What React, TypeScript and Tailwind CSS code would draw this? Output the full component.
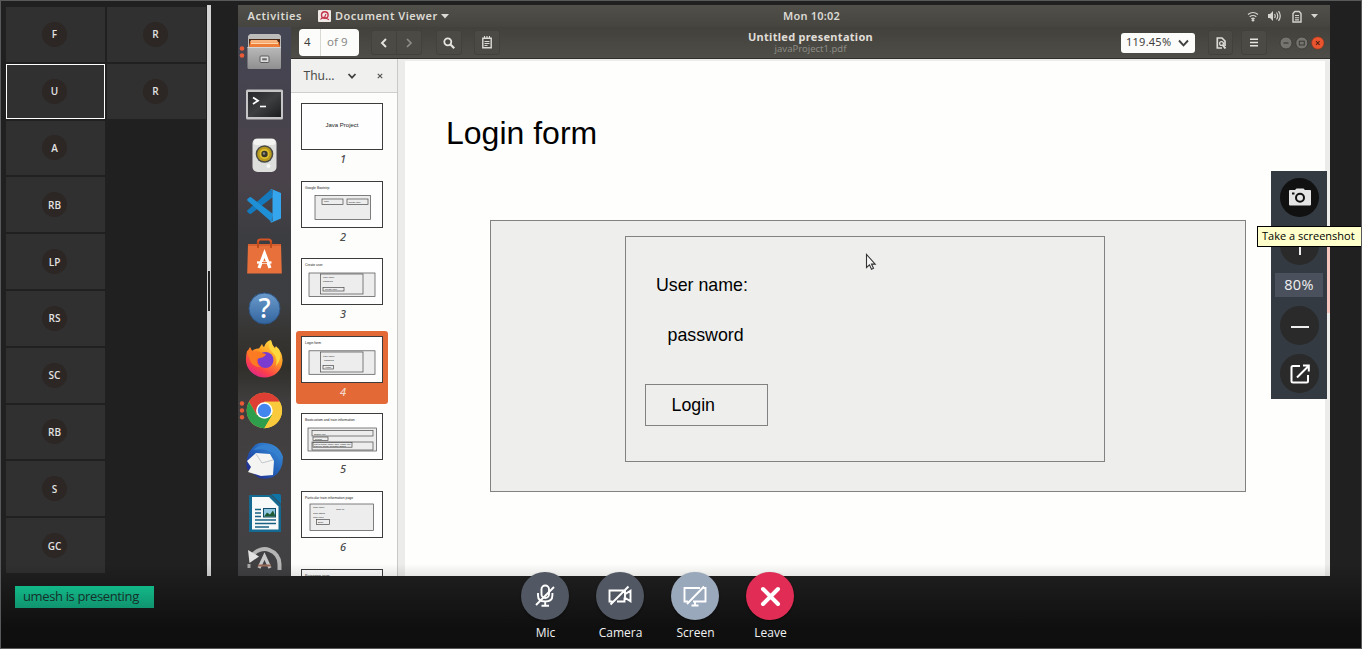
import React from 'react';

const UBUNTU = "font-['Noto_Sans','Open_Sans',sans-serif]";
const ARIAL = "font-['Liberation_Sans',Arial,sans-serif]";

function Tile({ label, active = false }: { label: string; active?: boolean }) {
  return (
    <div
      className={
        'flex items-center justify-center bg-[#303030] ' +
        (active ? 'border border-white' : 'px-px')
      }
    >
      <div className="mr-[2px] flex h-[25px] w-[25px] items-center justify-center rounded-full bg-[#2c2624] text-[10px] leading-none font-semibold text-[#e2e2e2]">
        {label}
      </div>
    </div>
  );
}

function Participants() {
  const left = ['F', 'U', 'A', 'RB', 'LP', 'RS', 'SC', 'RB', 'S', 'GC'];
  return (
    <div className="flex w-[201px] shrink-0 gap-[2px] pt-[2px]">
      <div className="grid w-[99px] auto-rows-[54.8px] content-start gap-[2px]">
        {left.map((l, i) => (
          <Tile key={i} label={l} active={i === 1} />
        ))}
      </div>
      <div className="grid w-[99px] auto-rows-[54.8px] content-start gap-[2px]">
        <Tile label="R" />
        <Tile label="R" />
      </div>
    </div>
  );
}

function Slot({ children }: { children: React.ReactNode }) {
  return (
    <svg viewBox="0 0 54 51.3" className="block h-[51.3px] w-[54px] shrink-0">
      {children}
    </svg>
  );
}

function Dock() {
  return (
    <div className="flex w-[53px] shrink-0 flex-col overflow-hidden bg-[linear-gradient(180deg,#444654_0%,#45434e_12%,#4b434b_27%,#3c3d41_38%,#3d3e41_50%,#363533_56%,#302f2a_62%,#403d3e_68%,#444244_85%,#403f41_100%)]">
      <svg width="0" height="0" className="absolute">
        <defs>
          <linearGradient id="cab" x1="0" y1="0" x2="0" y2="1">
            <stop offset="0" stopColor="#b9b9b9" />
            <stop offset="1" stopColor="#8f8f8f" />
          </linearGradient>
          <linearGradient id="term" x1="0" y1="0" x2="1" y2="1">
            <stop offset="0" stopColor="#26282b" />
            <stop offset="0.5" stopColor="#3c3e40" />
            <stop offset="1" stopColor="#1c1d1f" />
          </linearGradient>
          <linearGradient id="help" x1="0" y1="0" x2="0" y2="1">
            <stop offset="0" stopColor="#6b9bcb" />
            <stop offset="1" stopColor="#33659f" />
          </linearGradient>
          <linearGradient id="fox" x1="0.8" y1="0" x2="0.2" y2="1">
            <stop offset="0" stopColor="#ffe14a" />
            <stop offset="0.4" stopColor="#ff9a22" />
            <stop offset="0.75" stopColor="#fb3f4b" />
            <stop offset="1" stopColor="#d8219a" />
          </linearGradient>
          <linearGradient id="bird" x1="0" y1="1" x2="1" y2="0">
            <stop offset="0" stopColor="#241a80" />
            <stop offset="0.5" stopColor="#2360b8" />
            <stop offset="1" stopColor="#3f97df" />
          </linearGradient>
        </defs>
      </svg>
      <Slot>
        <circle cx="4" cy="21.5" r="2.3" fill="#ea5a35" />
        <circle cx="4" cy="28.5" r="2.3" fill="#ea5a35" />
        <path d="M12 7h29l2 2v15H10V9z" fill="#bcbcba" />
        <path d="M11 12h31v9H11z" fill="#4a2818" />
        <path d="M13 13h26l1 2H12z" fill="#f6b27c" />
        <path d="M12 15h29l1 5H11z" fill="#ee7d38" />
        <path d="M13 15.500h27v1.500H13z" fill="#ffd6a8" />
        <path d="M9.500 20h33.500v20.500q0 1.500-1.500 1.500H11q-1.500 0-1.500-1.500z" fill="url(#cab)" />
        <path d="M9.500 20h33.500v1H9.500z" fill="#d6d6d6" />
        <rect x="22" y="29" width="9" height="6.500" rx="1" fill="#dcdcdc" stroke="#5a5a5a" />
        <rect x="24.200" y="31.300" width="4.600" height="2" fill="#666" />
      </Slot>
      <Slot>
        <rect x="8" y="11.500" width="37" height="30" rx="1.500" fill="#c6c6c6" />
        <rect x="10" y="14" width="33" height="25" fill="url(#term)" />
        <path d="M15 19.500l5 3.200-5 3.200" fill="none" stroke="#fff" strokeWidth="1.800" />
        <path d="M22 28.500h6" stroke="#fff" strokeWidth="1.600" />
      </Slot>
      <Slot>
        <rect x="14.500" y="8.500" width="24" height="33.500" rx="5" fill="#dededc" />
        <rect x="15.500" y="9" width="22" height="6" rx="3" fill="#f3f3f1" />
        <circle cx="26.500" cy="24" r="8.800" fill="#4a4a44" />
        <circle cx="26.500" cy="24" r="7.300" fill="#b99a1e" />
        <circle cx="26.500" cy="24" r="5" fill="#dfc02c" />
        <circle cx="26.500" cy="24" r="3.200" fill="#37352c" />
        <circle cx="26" cy="23.500" r="1.200" fill="#8c8a80" />
        <circle cx="30.500" cy="36" r="2" fill="#f6f6f4" />
      </Slot>
      <Slot>
        <path d="M33.500 8L9.500 29.300q-.8.900 0 1.800l2 1.700q.8.500 1.600 0L35 16z" fill="#1479bd" />
        <path d="M33.500 41L9.500 19.700q-.8-.9 0-1.800l2-1.700q.8-.5 1.600 0L35 33z" fill="#1f8fd6" />
        <path d="M33.500 8l9.500 4v25.500l-9.500 4q-1 0-1.500-.7l2.500-.8V8.800L32 8.500z" fill="#35a5ee" />
      </Slot>
      <Slot>
        <path d="M20 16V10q0-2.500 2.500-2.500h8Q33 7.500 33 10v6" fill="none" stroke="#d45425" strokeWidth="2.200" />
        <path d="M10 12h33l.8 29.500H9.200z" fill="#e8703a" />
        <path d="M10 12h33v2H10z" fill="#d86030" />
        <path d="M20 10v6M33 10v6" stroke="#b84618" strokeWidth="1.600" />
        <path d="M21 36l5.500-14.500L32 36" fill="none" stroke="#fff" strokeWidth="3.200" />
        <path d="M19 30.500h14.500" stroke="#fff" strokeWidth="2.300" />
        <path d="M24 30.500h5" stroke="#e8703a" strokeWidth="1" />
      </Slot>
      <Slot>
        <circle cx="26.500" cy="25.500" r="15.500" fill="url(#help)" stroke="#2d5688" />
        <text x="26.500" y="35" textAnchor="middle" fontSize="27" fontWeight="500" fill="#fff" className={UBUNTU}>
          ?
        </text>
      </Slot>
      <Slot>
        <path
          d="M9 16q1 0 3-4l2 4q4-3 7-2.500L24 9q1 3 2 3 2-6 7-7 1 5 4 8l1-2q7 7 6.500 15C44 36 36 42.500 26.500 42.500S8.500 35 8 26q-.3-5 1-10z"
          fill="url(#fox)"
        />
        <circle cx="27.500" cy="25" r="8" fill="#7a3bd0" />
        <path d="M9 17q2-1 3-4l3 4q5-2 9 1l4 1q-1 3-6 4-2 0-3 2-1 5 4 7-9 0-11-7z" fill="#fb7a22" />
        <path d="M31 9q0 6 4 9 5 5 3 13 7-8 3-17l-3-2-1 2q-3-2-4-8z" fill="#ffd83d" />
      </Slot>
      <Slot>
        <circle cx="4" cy="17.500" r="2.200" fill="#ea5a35" />
        <circle cx="4" cy="24.500" r="2.200" fill="#ea5a35" />
        <circle cx="4" cy="31.300" r="2.200" fill="#ea5a35" />
        <circle cx="26.400" cy="24.500" r="17.700" fill="#f6c93b" />
        <path d="M26.400 15.700h15.300A17.700 17.700 0 0 0 11 15.700l7.800 13.200z" fill="#dd3f34" />
        <path d="M11 15.700A17.700 17.700 0 0 0 26.400 42.200l7.700-13.300-15.300 0z" fill="#2f9e4c" />
        <path d="M26.400 42.200A17.700 17.700 0 0 0 41.700 15.700H26.400l7.700 13.200z" fill="#f9cb3c" />
        <circle cx="26.400" cy="24.500" r="8.300" fill="#fff" />
        <circle cx="26.400" cy="24.500" r="6.700" fill="#4286ee" />
      </Slot>
      <Slot>
        <path d="M17 8q4-3 10-2 14 1 18 14 0 14-10 20-6 3-14 1L9 32Q6 18 17 8z" fill="url(#bird)" />
        <path d="M15 13q9-8 19-4 8 4 8 14-4-8-11-9-6-3-16-1z" fill="#3580cf" />
        <path d="M9 24l9-8 14 1 4 7-1 14-12 1-13-4 3-5z" fill="#f4f4f2" />
        <path d="M18 17l6 9 11-3" fill="none" stroke="#c3c6cc" strokeWidth="1" />
      </Slot>
      <Slot>
        <path d="M11 6h22l10 10v27H11z" fill="#156a92" />
        <path d="M33 5l10 10V7q0-2-2-2z" fill="#0e74a8" />
        <path d="M14 8h17l9.500 9.500V40.500H14z" fill="#f8f9f9" />
        <path d="M17 20.500h6M17 24h6M17 27.500h6M17 31h21M17 34.500h21M17 38h14" stroke="#176183" strokeWidth="1.600" />
        <rect x="25.500" y="19.500" width="12" height="8.500" fill="#8fc6df" stroke="#124d69" />
        <path d="M26 27.500l3-4 3 2 3-4 2.500 6z" fill="#205a35" />
      </Slot>
      <Slot>
        <path d="M15 14.500a15 15 0 0 1 26.500 9.500v6" fill="none" stroke="#b5b5b5" strokeWidth="4" />
        <path d="M10 10l1.500 13 9.500-6.500z" fill="#e2e2e2" />
        <path d="M11 24v4" stroke="#a8a8a8" strokeWidth="3" />
        <path d="M21 28l5.500-12L32 28" fill="none" stroke="#c9c9c9" strokeWidth="3.200" />
        <path d="M20 25.500h13" stroke="#9a6a58" strokeWidth="2" />
      </Slot>
    </div>
  );
}

function Thumb({ n, title, children }: { n: number; title?: string; children?: React.ReactNode }) {
  const selected = n === 4;
  return (
    <div
      className={
        'flex h-[73px] w-[92px] shrink-0 flex-col items-center rounded-[3px] pt-[5px] ' +
        (selected ? 'bg-[#e36a36]' : '')
      }
    >
      <svg viewBox="0 0 82 47" className="block h-[47px] w-[82px] shrink-0">
        <rect x="0.500" y="0.500" width="81" height="46" fill="#fefefe" stroke="#3c3c3c" />
        {title && (
          <text x="4" y="8.200" fontSize="3.400" fill="#222" className={ARIAL}>
            {title}
          </text>
        )}
        {children}
      </svg>
      {n < 7 && (
        <span
          className={
            'ml-[2px] text-[11px] leading-[17px] font-medium italic ' +
            UBUNTU +
            (selected ? ' text-[#f4d9cc]' : ' text-[#4c4c4c]')
          }
        >
          {n}
        </span>
      )}
    </div>
  );
}

const boxStyle = { fill: '#ededed', stroke: '#4a4a4a', strokeWidth: 0.7 };

function Tiny({ x, y, children }: { x: number; y: number; children: string }) {
  return (
    <text x={x} y={y} fontSize="2.300" fill="#222" className={ARIAL}>
      {children}
    </text>
  );
}

function Thumbnails() {
  return (
    <div className="flex w-[107px] shrink-0 flex-col border-r border-[#c9c9c7] bg-[#fdfdfc]">
      <div className="flex h-[34px] shrink-0 items-center border-b border-[#cfcfcc] bg-[#f0f0ee] pl-[12.500px] text-[#4a4a48]">
        <span className={'w-[43.500px] text-[12px] ' + UBUNTU}>Thu…</span>
        <svg viewBox="0 0 10 10" className="h-[10px] w-[10px]">
          <path d="M1.500 3L5 6.700 8.500 3" fill="none" stroke="#3f3f3d" strokeWidth="1.700" />
        </svg>
        <svg viewBox="0 0 8 8" className="ml-[19px] h-[8px] w-[8px]">
          <path d="M1.800 1.800l4.400 4.400M6.200 1.800L1.800 6.200" stroke="#555" strokeWidth="1.200" />
        </svg>
      </div>
      <div className="flex min-h-0 flex-1 flex-col gap-[4.6px] overflow-hidden pt-[5px] pl-[5px]">
        <Thumb n={1}>
          <text x="41" y="24" fontSize="6" textAnchor="middle" fill="#222" className={ARIAL}>
            Java Project
          </text>
        </Thumb>
        <Thumb n={2} title="Google Bootstrp">
          <rect x="14" y="14.500" width="55.500" height="24" {...boxStyle} />
          <rect x="21" y="18" width="21" height="5.500" {...boxStyle} />
          <rect x="46" y="18" width="21" height="5.500" {...boxStyle} />
          <Tiny x={23} y={21.300}>login</Tiny>
          <Tiny x={47.500} y={21.600}>Create user</Tiny>
        </Thumb>
        <Thumb n={3} title="Create user">
          <rect x="8" y="15" width="66" height="23.500" {...boxStyle} />
          <rect x="19.500" y="16" width="42.500" height="20" {...boxStyle} />
          <Tiny x={22} y={19.700}>User name</Tiny>
          <Tiny x={22} y={23.700}>password</Tiny>
          <rect x="22" y="29.500" width="21" height="3.500" {...boxStyle} />
          <Tiny x={24} y={32.200}>Create user</Tiny>
        </Thumb>
        <Thumb n={4} title="Login form">
          <rect x="8" y="14.800" width="66" height="23.500" {...boxStyle} />
          <rect x="19.500" y="16" width="42.500" height="20" {...boxStyle} />
          <Tiny x={22} y={20.800}>User name:</Tiny>
          <Tiny x={23} y={24.900}>password</Tiny>
          <rect x="22" y="29.500" width="10.500" height="3.500" {...boxStyle} />
          <Tiny x={24.500} y={32.200}>Login</Tiny>
        </Thumb>
        <Thumb n={5} title="Bootcustom and train information">
          <rect x="7" y="15" width="68.500" height="23" {...boxStyle} />
          <rect x="11" y="17.500" width="61" height="5.500" {...boxStyle} />
          <rect x="12" y="24" width="15" height="3.500" {...boxStyle} />
          <rect x="11" y="29" width="61" height="8" {...boxStyle} />
          <rect x="12" y="29.500" width="39" height="4.700" {...boxStyle} />
          <Tiny x={13} y={21.500}>Station info</Tiny>
          <Tiny x={14} y={26.700}>search</Tiny>
          <Tiny x={13} y={31.500}>List of trains, name, time, class, fare</Tiny>
          <Tiny x={13} y={33.700}>train no, seats, available status</Tiny>
        </Thumb>
        <Thumb n={6} title="Particular train information page">
          <rect x="9" y="13" width="63.500" height="26.500" {...boxStyle} />
          <Tiny x={12} y={17}>Train name</Tiny>
          <Tiny x={35} y={18.500}>Train no</Tiny>
          <Tiny x={12} y={22.500}>Train status</Tiny>
          <Tiny x={12} y={26.500}>Train price</Tiny>
          <rect x="15.500" y="28.500" width="13" height="5" {...boxStyle} />
          <Tiny x={17} y={31.800}>Book</Tiny>
        </Thumb>
        <Thumb n={7} title="Passenger page" />
      </div>
    </div>
  );
}

function TopBar() {
  return (
    <div
      className={
        'flex h-[22px] shrink-0 items-center bg-[linear-gradient(180deg,#504f49,#45443f)] text-[11px] font-semibold text-[#dcdad4] ' +
        UBUNTU
      }
    >
      <div className="flex w-[503px] items-center pl-[9.500px]">
        <span className="w-[70.500px] tracking-[0.55px]">Activities</span>
        <svg viewBox="0 0 13 12" className="h-[12px] w-[13px]">
          <rect width="13" height="12" rx="1" fill="#efe9e6" />
          <circle cx="6.800" cy="5" r="3.300" fill="none" stroke="#c4344a" strokeWidth="1.400" />
          <path d="M2.500 9.500q2-2.500 4-2 3 1.500 4.500 2.200M6.500 7.500L8 4" fill="none" stroke="#c4344a" strokeWidth="1.100" />
        </svg>
        <span className="ml-[4px] tracking-[0.5px]">Document Viewer</span>
        <svg viewBox="0 0 8 5" className="ml-[3px] h-[5px] w-[8px]">
          <path d="M0 0h8L4 4.500z" fill="#dcdad4" />
        </svg>
      </div>
      <div className="flex flex-1 justify-start pl-[42px]">
        <span className="tracking-[0.2px]">Mon 10:02</span>
      </div>
      <div className="flex items-center pr-[12px]">
        <svg viewBox="0 0 12 12" className="h-[12px] w-[12px]">
          <path d="M1 4.500q5-4 10 0M2.700 6.800q3.300-2.600 6.600 0M4.300 8.700q1.700-1.200 3.400 0" fill="none" stroke="#d6d4ce" strokeWidth="1.200" />
          <circle cx="6" cy="10.200" r="1.300" fill="#d6d4ce" />
        </svg>
        <svg viewBox="0 0 13 12" className="ml-[9px] h-[12px] w-[13px]">
          <path d="M0 4h2l3-3v10L2 8H0z" fill="#d6d4ce" />
          <path d="M6.500 4q1.500 2 0 4M8.500 2.500q2.500 3.500 0 7M10.500 1.200q3.500 4.800 0 9.600" fill="none" stroke="#d6d4ce" strokeWidth="1.200" />
        </svg>
        <svg viewBox="0 0 10 13" className="ml-[11px] h-[13px] w-[10px]">
          <path d="M1 3.500L2.800 1.500h4.400L9 3.500V12H1z" fill="none" stroke="#d6d4ce" strokeWidth="1.400" />
          <path d="M3 5.500h4M3 7.700h4M3 9.900h4" stroke="#d6d4ce" strokeWidth="1.100" />
        </svg>
        <svg viewBox="0 0 7 4" className="ml-[9px] h-[4px] w-[7px]">
          <path d="M0 0h7L3.500 4z" fill="#d6d4ce" />
        </svg>
      </div>
    </div>
  );
}

function ToolButton({ children, className }: { children: React.ReactNode; className: string }) {
  return (
    <div className={'flex h-[25px] items-center justify-center rounded-[3px] border border-[#42413c] bg-[#4b4a45] ' + className}>
      {children}
    </div>
  );
}

function Toolbar() {
  return (
    <div
      className={
        'flex h-[32px] shrink-0 items-center border-b border-[#2f2e2b] bg-[linear-gradient(180deg,#42413c,#4e4d47)] pl-[8px] ' +
        UBUNTU
      }
    >
      <div className="flex h-[27px] w-[60px] overflow-hidden rounded-[4px] bg-[#fcfcfb] text-[11.5px] leading-[26px]">
        <span className="w-[22px] border-r border-[#d8d8d5] pl-[5px] text-[#3f3f3d]">4</span>
        <span className="pl-[6px] text-[#8a8a87]">of 9</span>
      </div>
      <ToolButton className="ml-[12px] w-[26px] rounded-r-none">
        <svg viewBox="0 0 8 10" className="h-[10px] w-[8px]">
          <path d="M6 1L2 5l4 4" fill="none" stroke="#e6e4df" strokeWidth="1.900" />
        </svg>
      </ToolButton>
      <ToolButton className="w-[25px] rounded-l-none border-l-0">
        <svg viewBox="0 0 8 10" className="h-[10px] w-[8px]">
          <path d="M2 1l4 4-4 4" fill="none" stroke="#8e8d88" strokeWidth="1.700" />
        </svg>
      </ToolButton>
      <ToolButton className="ml-[14px] w-[26px]">
        <svg viewBox="0 0 12 12" className="h-[12px] w-[12px]">
          <circle cx="4.800" cy="4.800" r="3.500" fill="none" stroke="#e6e4df" strokeWidth="1.800" />
          <path d="M7.500 7.500l3.700 3.700" stroke="#e6e4df" strokeWidth="2.200" />
        </svg>
      </ToolButton>
      <ToolButton className="ml-[12px] w-[26px]">
        <svg viewBox="0 0 12 13" className="h-[13px] w-[12px]">
          <path d="M1.800 2.200h8.400v9.600H1.800z" fill="none" stroke="#dddbd5" strokeWidth="1.400" />
          <path d="M3.500 0v3M6 0v3M8.500 0v3M3.500 5.500h5M3.500 7.500h5M3.500 9.500h3" stroke="#dddbd5" strokeWidth="1.100" />
        </svg>
      </ToolButton>
      <div className="flex flex-1 flex-col items-center pb-[2px] leading-none">
        <span className="text-[11px] leading-[13px] font-bold tracking-[0.300px] text-[#e0ded8]">Untitled presentation</span>
        <span className="text-[9.500px] leading-[11px] text-[#8b8a84]">javaProject1.pdf</span>
      </div>
      <div className="flex h-[20px] w-[74px] items-center rounded-[3px] bg-[#fcfcfb] pl-[5px] text-[11px] text-[#3f3f3d]">
        <span className="w-[52px] tracking-[0.250px]">119.45%</span>
        <svg viewBox="0 0 11 8" className="h-[8px] w-[11px]">
          <path d="M1 1.500L5.500 6.300 10 1.500" fill="none" stroke="#3f3f3d" strokeWidth="1.900" />
        </svg>
      </div>
      <ToolButton className="ml-[13px] w-[25px]">
        <svg viewBox="0 0 10 12" className="h-[12px] w-[10px]">
          <path d="M6 11H1.300V1h4.700l3 3v5" fill="none" stroke="#dddbd5" strokeWidth="1.700" />
          <circle cx="5.500" cy="6.500" r="1.900" fill="none" stroke="#dddbd5" strokeWidth="1.300" />
          <path d="M6.500 8l3 3.500" stroke="#dddbd5" strokeWidth="1.900" />
        </svg>
      </ToolButton>
      <ToolButton className="ml-[8px] w-[26px]">
        <svg viewBox="0 0 8 9" className="h-[9px] w-[8px]">
          <path d="M0 1.200h8M0 4.500h8M0 7.800h8" stroke="#e6e4df" strokeWidth="1.500" />
        </svg>
      </ToolButton>
      <svg viewBox="0 0 46 14" className="mr-[5px] ml-[12px] h-[14px] w-[46px]">
        <circle cx="7" cy="7" r="6" fill="#75746f" stroke="#3a3935" strokeWidth="0.800" />
        <path d="M4.500 7h5" stroke="#3b3a36" strokeWidth="1.200" />
        <circle cx="22.800" cy="7" r="6" fill="#75746f" stroke="#3a3935" strokeWidth="0.800" />
        <rect x="20.300" y="5.200" width="5" height="3.800" fill="none" stroke="#3b3a36" />
        <circle cx="38.800" cy="7" r="6.200" fill="#ea5530" stroke="#8a3318" strokeWidth="0.600" />
        <path d="M37 5.200l3.600 3.600M40.600 5.200l-3.600 3.600" stroke="#5b2212" strokeWidth="1.200" />
      </svg>
    </div>
  );
}

function Slide() {
  return (
    <div
      className={
        'relative flex min-w-0 flex-1 flex-col border-t-[2px] border-r-[5px] border-l-[7px] border-[#ececea] bg-[#fefefd] pl-[41px] text-black ' +
        ARIAL
      }
    >
      <h1 className="mt-[52px] text-[32px] leading-[40px]">Login form</h1>
      <div className="mt-[66.500px] ml-[44px] h-[272px] w-[756px] border border-[#828282] bg-[#eeeeed] pt-[15px] pl-[134px]">
        <div className="flex h-[226px] w-[480px] flex-col items-start border border-[#828282] pl-[19px] text-[17.800px] leading-[22px]">
          <span className="mt-[37px] ml-[11px]">User name:</span>
          <span className="mt-[28.500px] ml-[22.500px]">password</span>
          <span className="mt-[38px] h-[42px] w-[123px] border border-[#828282] pl-[25.500px] leading-[40px]">Login</span>
        </div>
      </div>
      <svg viewBox="0 0 12 18" className="absolute top-[192px] left-[460px] h-[18px] w-[12px]">
        <path d="M1.500 1.500v13l3-2.700 2 4.500 2-1-2-4.200h3.700z" fill="#f6f6f6" stroke="#333" strokeWidth="1.100" />
      </svg>
    </div>
  );
}

function RoundTool({ children, dark = false }: { children: React.ReactNode; dark?: boolean }) {
  return (
    <div
      className={
        'flex h-[39px] w-[39px] shrink-0 items-center justify-center rounded-full ' +
        (dark ? 'bg-[#111111]' : 'bg-[#2a2a2a]')
      }
    >
      {children}
    </div>
  );
}

function ZoomPanel() {
  return (
    <>
      <div className="absolute top-[246px] left-[1326px] h-[66px] w-[3px] bg-[#f4c6bd]" />
      <div className="absolute top-[170px] left-[1270px] flex h-[228px] w-[56px] flex-col items-center gap-[9px] bg-[#343a42] pt-[7px]">
        <RoundTool dark>
          <svg viewBox="0 0 24 18" className="h-[18px] w-[24px] translate-x-px -translate-y-px">
            <path d="M2 2h5l1.500-1.500h7L17 2h5q1 0 1 1v13.500q0 1-1 1H2q-1 0-1-1V3q0-1 1-1z" fill="#e4e4e4" />
            <circle cx="12" cy="9.800" r="4" fill="none" stroke="#111" strokeWidth="2" />
            <rect x="4" y="4.500" width="2.500" height="2" fill="#111" />
          </svg>
        </RoundTool>
        <RoundTool>
          <svg viewBox="0 0 18 18" className="h-[18px] w-[18px] translate-x-px">
            <path d="M9 0v18M0 9h18" stroke="#eee" strokeWidth="2" />
          </svg>
        </RoundTool>
        <div className="-mt-px flex h-[24px] w-[48px] shrink-0 items-center justify-center bg-[#4a515d] text-[14.500px] leading-none tracking-[0.300px] text-[#f0f0f0]">
          80%
        </div>
        <RoundTool>
          <svg viewBox="0 0 18 4" className="h-[4px] w-[18px] translate-x-px translate-y-px">
            <path d="M0 2h18" stroke="#eee" strokeWidth="2" />
          </svg>
        </RoundTool>
        <RoundTool>
          <svg viewBox="0 0 20 20" className="h-[20px] w-[20px] translate-x-px">
            <path d="M10 2H3q-1.500 0-1.500 1.500v13.500q0 1.500 1.500 1.500h13.500q1.500 0 1.500-1.500v-6" fill="none" stroke="#fff" strokeWidth="2" />
            <path d="M13 1.500h5.800v6M18.500 2L7 13.500" fill="none" stroke="#fff" strokeWidth="2" />
          </svg>
        </RoundTool>
      </div>
      <div className="absolute top-[225px] left-[1256px] flex h-[21px] w-[105px] items-center border border-r-0 border-black bg-[#ffffcb] pl-[4px] text-[11px] whitespace-nowrap text-black">
        Take a screenshot
      </div>
    </>
  );
}

function Control({ label, color, children }: { label: string; color: string; children: React.ReactNode }) {
  return (
    <div className="flex w-[75px] flex-col items-center">
      <div className={'mr-[2px] flex h-[48px] w-[48px] items-center justify-center rounded-full shadow-[0_1px_2px_rgba(0,0,0,0.5)] ' + color}>
        <svg viewBox="0 0 24 24" className="h-[24px] w-[24px]" fill="none" stroke="#fff" strokeWidth="1.900">
          {children}
        </svg>
      </div>
      <span className="mt-[4px] text-[12px] leading-[17px] text-[#f2f2f2]">{label}</span>
    </div>
  );
}

function Footer() {
  return (
    <div className="relative -mt-[12px] flex h-[84px] flex-1">
      <div className="pointer-events-none absolute inset-0 z-0 bg-[linear-gradient(180deg,rgba(0,0,0,0)_0%,rgba(0,0,0,0.1)_16%,rgba(0,0,0,0.52)_75%,rgba(0,0,0,0.56)_100%)]" />
      <div className="z-10 mt-[22px] ml-[14px] flex h-[22px] w-[139px] items-center bg-[linear-gradient(180deg,#12b888,#10946f)] pl-[8px] text-[13px] tracking-[-0.360px] whitespace-nowrap text-[#15302a]">
        umesh is presenting
      </div>
      <div className="z-10 mt-[8px] ml-[354px] flex">
        <Control label="Mic" color="bg-[#525863]">
          <rect x="8.500" y="1.500" width="7.500" height="12.500" rx="3.700" />
          <path d="M5 9v2.500q0 6 7.200 6t7.200-6V9M12.200 17.500v4M8.500 21.700h7.500M21 3L3 21" />
        </Control>
        <Control label="Camera" color="bg-[#525863]">
          <path d="M17 10V6.500H1.500v11h3M9 17.500h7.500v-4M22.500 6.800v10.400L17 13.800v-3.600zM20.500 2.500L2.500 20.500" />
        </Control>
        <Control label="Screen" color="bg-[#9aa8bb]">
          <path d="M17 4H1.500v13.500H5M10 17.500h12.500V4h-2M12 17.500V21M8.500 21.500h7M21 2.500L4 20" />
        </Control>
        <Control label="Leave" color="bg-[#e12d55]">
          <path d="M5 5l15 15M20 5L5 20" strokeWidth="4" strokeLinecap="round" />
        </Control>
      </div>
    </div>
  );
}

export default function App() {
  return (
    <div className="relative flex h-[649px] w-[1362px] flex-col overflow-hidden border border-[#58595a] bg-[#202020] font-['Open_Sans','Noto_Sans',sans-serif]">
      <div className="flex h-[575px] shrink-0 pt-[4px] pl-[5px]">
        <Participants />
        <div className="flex w-[4px] shrink-0 items-center bg-[#d4d4d4]">
          <div className="ml-[1px] h-[40px] w-[2px] bg-[#222]" />
        </div>
        <div className="ml-[27px] flex w-[1092px] shrink-0 flex-col overflow-hidden">
          <TopBar />
          <div className="flex min-h-0 flex-1">
            <Dock />
            <div className="flex min-w-0 flex-1 flex-col">
              <Toolbar />
              <div className="flex min-h-0 flex-1">
                <Thumbnails />
                <Slide />
              </div>
            </div>
          </div>
        </div>
      </div>
      <ZoomPanel />
      <Footer />
    </div>
  );
}
